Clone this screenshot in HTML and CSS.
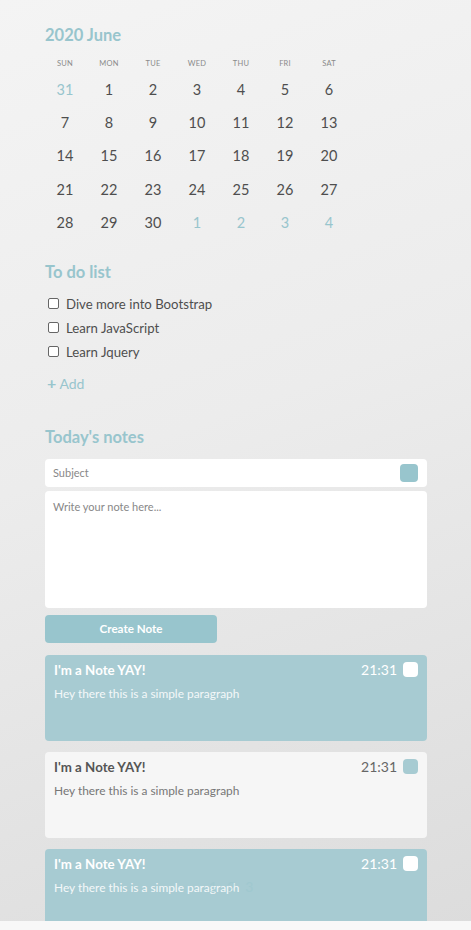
FILE: index.html
```html
<!DOCTYPE html>
<html>
<head>
<meta charset="utf-8">
<link rel="stylesheet" href="styles.css">
</head>
<body>
<div class="page">
  <section class="calendar">
    <h2 class="title cal-title">2020 June</h2>
    <div class="cal-grid">
      <div class="dn">SUN</div><div class="dn">MON</div><div class="dn">TUE</div><div class="dn">WED</div><div class="dn">THU</div><div class="dn">FRI</div><div class="dn">SAT</div>
      <div class="d other">31</div><div class="d">1</div><div class="d">2</div><div class="d">3</div><div class="d">4</div><div class="d">5</div><div class="d">6</div>
      <div class="d">7</div><div class="d">8</div><div class="d">9</div><div class="d">10</div><div class="d">11</div><div class="d">12</div><div class="d">13</div>
      <div class="d">14</div><div class="d">15</div><div class="d">16</div><div class="d">17</div><div class="d">18</div><div class="d">19</div><div class="d">20</div>
      <div class="d">21</div><div class="d">22</div><div class="d">23</div><div class="d">24</div><div class="d">25</div><div class="d">26</div><div class="d">27</div>
      <div class="d">28</div><div class="d">29</div><div class="d">30</div><div class="d other">1</div><div class="d other">2</div><div class="d other">3</div><div class="d other">4</div>
    </div>
  </section>

  <section class="todo">
    <h2 class="title">To do list</h2>
    <ul class="todo-list">
      <li><span class="cb"></span>Dive more into Bootstrap</li>
      <li><span class="cb"></span>Learn JavaScript</li>
      <li><span class="cb"></span>Learn Jquery</li>
    </ul>
    <div class="add"><span class="plus">+</span> Add</div>
  </section>

  <section class="notes">
    <h2 class="title">Today's notes</h2>
    <div class="subject"><span class="ph">Subject</span><span class="swatch"></span></div>
    <div class="textarea"><span class="ph">Write your note here...</span></div>
    <div class="btn">Create Note</div>

    <div class="note blue">
      <div class="note-head"><span class="note-title">I'm a Note YAY!</span><span class="note-time">21:31</span><span class="note-cb"></span></div>
      <p class="note-text">Hey there this is a simple paragraph</p>
    </div>
    <div class="note light">
      <div class="note-head"><span class="note-title">I'm a Note YAY!</span><span class="note-time">21:31</span><span class="note-cb"></span></div>
      <p class="note-text">Hey there this is a simple paragraph</p>
    </div>
    <div class="note blue last">
      <div class="note-head"><span class="note-title">I'm a Note YAY!</span><span class="note-time">21:31</span><span class="note-cb"></span></div>
      <p class="note-text">Hey there this is a simple paragraph</p>
      <div class="pager"><span>1</span><span>2</span><span>3</span></div>
    </div>
  </section>
</div>
<div class="footer"></div>
</body>
</html>
```
FILE: styles.css
```css
* { box-sizing: border-box; }
html, body { margin: 0; padding: 0; }
body {
  width: 471px;
  height: 930px;
  overflow: hidden;
  font-family: Lato, "Open Sans", sans-serif;
  background: linear-gradient(160deg, #f4f4f4 0%, #ececec 45%, #dcdcdc 100%);
  color: #555;
}
.page {
  padding: 26px 44px 0 45px;
  width: 471px;
}
.title {
  margin: 0;
  font-size: 16.5px;
  line-height: 19px;
  font-weight: 700;
  color: #98c5cd;
}
.cal-grid {
  margin: 11px 0 0 -2px;
  display: grid;
  grid-template-columns: repeat(7, 44px);
  grid-auto-rows: 33.4px;
  grid-template-rows: 15px;
  align-items: center;
  text-align: center;
}
.dn {
  font-size: 7.5px;
  color: #8a8a8a;
  letter-spacing: 0.2px;
  align-self: center;
}
.cal-grid .dn { height: 15px; line-height: 15px; }
.d {
  font-size: 14.5px;
  font-weight: 400;
  color: #4e4e4e;
  padding-top: 3px;
}
.other { color: #98c5cd; }

.todo { margin-top: 25px; }
.todo-list {
  list-style: none;
  margin: 10px 0 0 0;
  padding: 0;
}
.todo-list li {
  display: flex;
  align-items: center;
  height: 24px;
  font-size: 13.2px;
  font-weight: 400;
  color: #4e4e4e;
}
.cb {
  width: 11px;
  height: 11px;
  border: 1px solid #666;
  border-radius: 2px;
  background: #fff;
  margin: 0 7px 0 3px;
}
.add {
  margin-top: 8px;
  height: 22px;
  line-height: 22px;
  font-size: 14px;
  color: #98c5cd;
  padding-left: 2px;
}
.plus { font-size: 16px; font-weight: 700; }

.notes { margin-top: 34px; }
.subject {
  margin-top: 12px;
  height: 28px;
  background: #fff;
  border-radius: 4px;
  display: flex;
  align-items: center;
  justify-content: space-between;
  padding: 0 9px 0 8px;
}
.ph { font-size: 11px; color: #888; }
.swatch {
  width: 18px;
  height: 18px;
  border-radius: 4px;
  background: #98c5cd;
}
.textarea {
  margin-top: 4px;
  height: 117px;
  background: #fff;
  border-radius: 4px;
  padding: 8px 8px;
  line-height: 12px;
}
.btn {
  margin-top: 7px;
  width: 172px;
  height: 28px;
  border-radius: 4px;
  background: #98c5cd;
  color: #fff;
  font-size: 11.6px;
  font-weight: 700;
  display: flex;
  align-items: center;
  justify-content: center;
}
.note {
  position: relative;
  margin-top: 12px;
  height: 86px;
  border-radius: 4px;
  padding: 7px 9px 0 9px;
}
.note + .note { margin-top: 11px; }
.note.blue { background: #a7cbd2; color: #fff; }
.note.light { background: #f6f6f6; color: #555; }
.note-head {
  display: flex;
  align-items: center;
  height: 16px;
}
.note-title { font-size: 13.3px; font-weight: 700; flex: 1; }
.note-time { font-size: 14px; font-weight: 400; margin-right: 6px; }
.note-cb {
  width: 15px;
  height: 15px;
  border-radius: 4px;
  background: #fff;
}
.light .note-cb { background: #a7cbd2; }
.light .note-title { color: #555; }
.light .note-time { color: #666; }
.note-text {
  margin: 9px 0 0 0;
  font-size: 11.9px;
  line-height: 14px;
}
.light .note-text { color: #777; }
.blue .note-text { color: #f4f8f9; }
.note.last { height: 90px; }
.pager {
  position: absolute;
  left: 164px;
  top: 29px;
  display: flex;
  gap: 10px;
  font-size: 14px;
  color: #98c5cd;
  opacity: 0.45;
}
.footer {
  position: fixed;
  left: 0;
  bottom: 0;
  width: 471px;
  height: 9px;
  background: #f8f8f8;
}
```
